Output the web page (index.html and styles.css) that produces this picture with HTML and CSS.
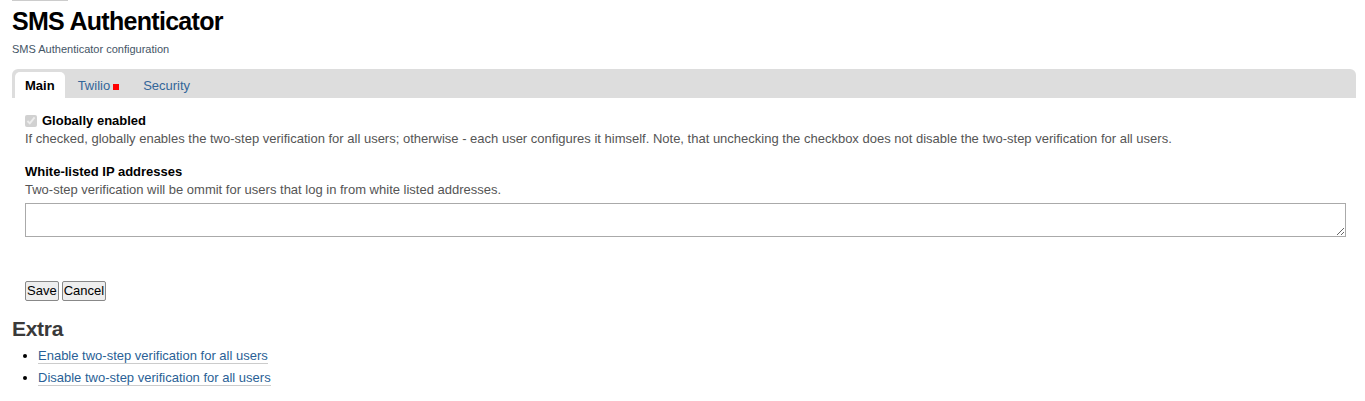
FILE: index.html
```html
<!DOCTYPE html>
<html>
<head>
<meta charset="utf-8">
<link rel="stylesheet" href="styles.css">
</head>
<body>
<div class="page">
  <div class="topline"></div>
  <h1 class="title">SMS Authenticator</h1>
  <p class="subtitle">SMS Authenticator configuration</p>
  <div class="tabs">
    <span class="tab active">Main</span>
    <span class="tab">Twilio<span class="marker"></span></span>
    <span class="tab">Security</span>
  </div>
  <form class="form">
    <div class="field">
      <label class="check-label"><input type="checkbox" checked disabled class="check"> Globally enabled</label>
      <div class="desc">If checked, globally enables the two-step verification for all users; otherwise - each user configures it himself. Note, that unchecking the checkbox does not disable the two-step verification for all users.</div>
    </div>
    <div class="field">
      <div class="label">White-listed IP addresses</div>
      <div class="desc">Two-step verification will be ommit for users that log in from white listed addresses.</div>
      <textarea class="area"></textarea>
    </div>
    <div class="buttons">
      <button type="button" class="btn">Save</button>
      <button type="button" class="btn">Cancel</button>
    </div>
  </form>
  <h2 class="extra">Extra</h2>
  <ul class="links">
    <li><a href="#">Enable two-step verification for all users</a></li>
    <li><a href="#">Disable two-step verification for all users</a></li>
  </ul>
</div>
</body>
</html>
```
FILE: styles.css
```css
html, body {
  margin: 0;
  padding: 0;
  background: #fff;
}
body {
  font-family: "Liberation Sans", Arial, sans-serif;
  font-size: 13px;
  color: #000;
}
.page {
  padding: 0 9px 0 12px;
}
.topline {
  width: 56px;
  height: 1px;
  background: #ccc;
}
.title {
  margin: 5px 0 0;
  font-size: 25px;
  line-height: 30px;
  font-weight: bold;
  letter-spacing: -0.7px;
}
.subtitle {
  margin: 6px 0 0;
  font-size: 11px;
  line-height: 14px;
  color: #445566;
}
.tabs {
  margin-top: 13px;
  background: #ddd;
  border-radius: 6px 6px 0 0;
  height: 29px;
  display: flex;
  align-items: flex-end;
  padding-left: 3px;
}
.tab {
  display: flex;
  align-items: center;
  height: 26px;
  padding: 0 12px;
  font-size: 13px;
  color: #336699;
}
.tab.active {
  background: #fff;
  color: #000;
  font-weight: bold;
  padding: 0 10px;
  border-radius: 5px 5px 0 0;
  margin-right: 1px;
}
.marker {
  display: inline-block;
  width: 6px;
  height: 6px;
  background: #f00;
  margin-left: 3px;
  margin-top: 3px;
}
.form {
  padding: 15px 10px 0 13px;
}
.field {
  margin-bottom: 17px;
}
.check-label {
  display: flex;
  align-items: center;
  font-weight: bold;
  font-size: 13px;
  line-height: 16px;
}
.check {
  margin: 0 5px 0 0;
  width: 12px;
  height: 12px;
}
.label {
  font-weight: bold;
  font-size: 13px;
  line-height: 16px;
}
.desc {
  margin-top: 2px;
  color: #555;
  font-size: 13px;
  line-height: 16px;
}
.area {
  display: block;
  box-sizing: border-box;
  width: 100%;
  height: 34px;
  margin-top: 5px;
  border: 1px solid #aaa;
  resize: vertical;
}
.buttons {
  display: flex;
  gap: 3px;
  margin-top: 44px;
}
.btn {
  font-family: "Liberation Sans", Arial, sans-serif;
  font-size: 13px;
  padding: 1px 1px;
  height: 20px;
  line-height: 16px;
  background: #eee;
  border: 1px solid #888;
  border-radius: 2px;
  color: #000;
}
.extra {
  margin: 16px 0 0;
  font-size: 21px;
  line-height: 24px;
  color: #3a3a3a;
  letter-spacing: -0.3px;
}
.links {
  margin: 4px 0 0;
  padding-left: 26px;
}
.links li {
  font-size: 13px;
  line-height: 22px;
}
.links a {
  color: #2a5f96;
  text-decoration: none;
  border-bottom: 1px solid #ccc;
}
```
